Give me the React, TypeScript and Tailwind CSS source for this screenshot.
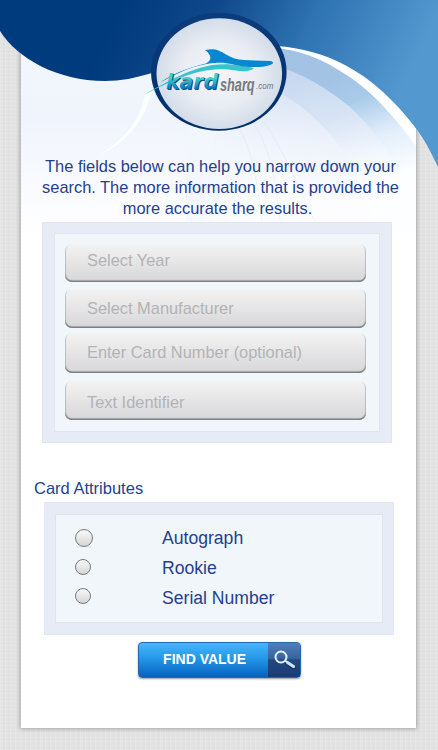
import clsx from "clsx";
import { useState } from "react";

const FIELDS = [
  { name: "year", placeholder: "Select Year", className: "h-[38px] pb-[5px]" },
  {
    name: "manufacturer",
    placeholder: "Select Manufacturer",
    className: "mt-[7px] h-[39px] pb-[1px]",
  },
  {
    name: "number",
    placeholder: "Enter Card Number (optional)",
    className: "mt-[5px] h-[40px] pb-[2px]",
  },
  {
    name: "identifier",
    placeholder: "Text Identifier",
    className: "mt-[8px] h-[39px] pt-[3px]",
  },
];

const ATTRIBUTES = [
  { label: "Autograph", dot: "size-[18px]", row: "h-[30px]" },
  { label: "Rookie", dot: "mb-[2px] size-4", row: "h-[30px]" },
  { label: "Serial Number", dot: "mb-[3px] size-4", row: "h-[29px]" },
];

function Backdrop() {
  return (
    <svg
      className="pointer-events-none absolute top-0 left-0 h-[750px] w-[438px]"
      viewBox="0 0 438 750"
      fill="none"
    >
      <defs>
        <linearGradient
          id="sky"
          gradientUnits="userSpaceOnUse"
          x1="125"
          y1="0"
          x2="385"
          y2="125"
        >
          <stop offset="0" stopColor="#003b7d" />
          <stop offset="0.3" stopColor="#10498b" />
          <stop offset="0.62" stopColor="#2f74b3" />
          <stop offset="1" stopColor="#5398cf" />
        </linearGradient>
        <linearGradient id="paper" x1="0" y1="0" x2="0" y2="1">
          <stop offset="0" stopColor="#f3f7fd" />
          <stop offset="0.5" stopColor="#f0f4fc" />
          <stop offset="0.75" stopColor="#f8faff" />
          <stop offset="1" stopColor="#ffffff" />
        </linearGradient>
        <linearGradient
          id="band"
          gradientUnits="userSpaceOnUse"
          x1="345"
          y1="75"
          x2="378"
          y2="180"
        >
          <stop offset="0" stopColor="#a3c3e4" />
          <stop offset="0.25" stopColor="#a9cbea" />
          <stop offset="0.6" stopColor="#e1eefa" />
          <stop offset="1" stopColor="#fdfeff" />
        </linearGradient>
        <linearGradient
          id="bandMid"
          gradientUnits="userSpaceOnUse"
          x1="310"
          y1="75"
          x2="335"
          y2="195"
        >
          <stop offset="0" stopColor="#c7d8f0" />
          <stop offset="0.4" stopColor="#d9e5f5" />
          <stop offset="0.75" stopColor="#f3f8fd" />
          <stop offset="1" stopColor="#fdfeff" />
        </linearGradient>
        <linearGradient
          id="bandInner"
          gradientUnits="userSpaceOnUse"
          x1="290"
          y1="90"
          x2="280"
          y2="195"
        >
          <stop offset="0" stopColor="#d9e4f5" />
          <stop offset="0.4" stopColor="#ebf1fb" />
          <stop offset="1" stopColor="#fcfdff" />
        </linearGradient>
        <linearGradient id="fade" x1="0" y1="0" x2="1" y2="0">
          <stop offset="0" stopColor="#f2f6fd" />
          <stop offset="1" stopColor="#f2f6fd" stopOpacity="0" />
        </linearGradient>
        <clipPath id="sheet">
          <rect x="21" y="0" width="395" height="728" />
        </clipPath>
      </defs>

      <g clipPath="url(#sheet)">
        <rect x="21" y="0" width="395" height="240" fill="url(#paper)" />
        <path
          d="M270 44C300 47 325 54 345 68C360 77 368 83 376 92C392 110 404 128 420 151V232H270Z"
          fill="url(#band)"
        />
        <path
          d="M260 62C290 67 318 82 345 103C366 120 386 148 398 168C407 186 412 205 416 232H240Z"
          fill="url(#bandMid)"
        />
        <path
          d="M230 82C262 80 292 97 311 115C330 132 344 150 352 166C362 186 370 208 374 232H190Z"
          fill="url(#bandInner)"
        />
        <rect x="186" y="120" width="70" height="112" fill="url(#fade)" />
        <path
          d="M151 92C147 118 125 145 97 156C124 141 140 121 146 92Z"
          fill="#fdfeff"
        />
        <path
          d="M239 128C252 150 258 184 262 222M254 124C268 146 276 176 280 222M263 121C282 147 297 184 315 222"
          stroke="#dbe4f2"
          strokeWidth="1"
          opacity="0.5"
        />
        <path d="M21 205H416V250H21Z" fill="#ffffff" opacity="0.3" />
        <path
          d="M276 45C300 47 325 54 345 65.500C372 80 396 103 420 132V151C404 130 390 112 373 96C365 88 356 81 345 74C328 63 308 52 281 48.500Z"
          fill="#ffffff"
        />
      </g>

      <path
        d="M0 0H438V167C431 152 424 139 416 128.500C396 102 372 79 345 65C325 54.500 302 47.500 276 46L220 58L152 73C135 78 121 81 105 81C57 81 17 58 0 31Z"
        fill="url(#sky)"
      />
    </svg>
  );
}

function Logo() {
  return (
    <svg
      className="absolute top-[10px] left-[140px] h-[124px] w-[160px]"
      viewBox="140 10 160 124"
      role="img"
      aria-label="kardsharq.com"
    >
      <defs>
        <radialGradient id="disc">
          <stop offset="0" stopColor="#f5f6fa" />
          <stop offset="0.6" stopColor="#e9ecf3" />
          <stop offset="1" stopColor="#d3dde9" />
        </radialGradient>
        <linearGradient id="kard" x1="0" y1="0" x2="0" y2="1">
          <stop offset="0.35" stopColor="#42cfca" />
          <stop offset="0.75" stopColor="#0a7cc6" />
        </linearGradient>
        <linearGradient id="ring" x1="0" y1="0" x2="0" y2="1">
          <stop offset="0" stopColor="#0b3c7c" />
          <stop offset="1" stopColor="#002e6c" />
        </linearGradient>
      </defs>
      <ellipse cx="218.8" cy="71.8" rx="67.8" ry="59" fill="url(#ring)" />
      <ellipse cx="219.3" cy="73.6" rx="62.8" ry="55.4" fill="url(#disc)" />

      <path
        d="M143.500 95C167 82 192 66 222 64C232 64 240 66 250 67C256 68 253 70 247 71C237 72 231 68 215 69.500C190 71 166 84 143.500 95Z"
        fill="#38c4cb"
      />
      <path
        d="M160 82.500C177 71 193 67 206 63.500C211 61 213 56 205 50C215 48 219 50 226 54.500C232 58 237 59.500 244 60L270 61C275 62 273 64 270 65C263 67.500 253 67.500 244 66.500C235 65.500 229 62.500 218 62.800C194 64 178 74 160 82.500Z"
        fill="#0787cf"
      />
      <path
        d="M166 80C187 68 207 62.500 225 64"
        stroke="#e8f4fa"
        strokeWidth="0.8"
        fill="none"
      />

      <g
        fontFamily="DejaVu Sans, sans-serif"
        fontSize="21"
        fontWeight="700"
        fontStyle="italic"
      >
        <text
          x="167"
          y="89.600"
          textLength="52"
          lengthAdjust="spacingAndGlyphs"
          fill="#174a70"
        >
          kard
        </text>
        <text
          x="166"
          y="88.800"
          textLength="52"
          lengthAdjust="spacingAndGlyphs"
          fill="url(#kard)"
        >
          kard
        </text>
      </g>
      <text
        transform="translate(220 90.800) scale(0.67 1)"
        fontFamily="Liberation Sans, sans-serif"
        fontSize="19"
        fontWeight="700"
        fontStyle="italic"
        fill="#77797e"
      >
        sharq
      </text>
      <text
        transform="translate(256 89.200) scale(0.89 1)"
        fontFamily="Liberation Sans, sans-serif"
        fontSize="9"
        fontStyle="italic"
        fill="#70747c"
      >
        .com
      </text>
    </svg>
  );
}

function SearchIcon() {
  return (
    <svg className="size-6" viewBox="0 0 24 24" fill="none">
      <path
        d="M14 14L21.500 19.500"
        stroke="#142e5d"
        strokeWidth="4"
        strokeLinecap="round"
      />
      <circle cx="9" cy="9" r="5.500" stroke="#e1f2fc" strokeWidth="2" />
      <path d="M13 12.500L15.500 14.500" stroke="#e1f2fc" strokeWidth="2" />
      <path
        d="M15.500 14.500L21.500 18.500"
        stroke="#c5e8fb"
        strokeWidth="3.200"
        strokeLinecap="round"
      />
    </svg>
  );
}

export default function App() {
  const [attribute, setAttribute] = useState<string | null>(null);

  return (
    <main className="relative h-[750px] w-[438px] overflow-hidden bg-[#e2e2e2] bg-[repeating-linear-gradient(90deg,rgba(255,255,255,0.12)_0_1px,transparent_1px_3px,rgba(0,0,0,0.008)_3px_5px),repeating-linear-gradient(0deg,rgba(255,255,255,0.1)_0_1px,transparent_1px_4px)] font-['Liberation_Sans',Arial,sans-serif] text-[#243f8d]">
      <div className="ml-[21px] h-[728px] w-[395px] bg-white shadow-[0_0_4px_1px_rgba(0,0,0,0.28)]" />
      <Backdrop />
      <Logo />

      <div className="absolute inset-0 flex flex-col pt-[156px]">
        <div className="h-[66px] text-center text-[16.4px] leading-[21px] whitespace-nowrap">
          <p className="pl-[3px]">The fields below can help you narrow down your</p>
          <p className="pl-[3px]">
            search. The more information that is provided the
          </p>
          <p className="pr-[3px]">more accurate the results.</p>
        </div>

        <section className="ml-[42px] h-[221px] w-[350px] border border-[#e0e5f1] bg-[#e6ebf5] px-[11px] py-[10px]">
          <div className="flex h-[199px] flex-col border border-[#dfe6f2] bg-[#f1f6fb] px-[10px] pt-[10px]">
            {FIELDS.map((field) => (
              <input
                key={field.name}
                name={field.name}
                placeholder={field.placeholder}
                className={clsx(
                  "w-[301px] shrink-0 rounded-[7px] bg-linear-to-b from-[#f3f3f3] to-[#d7d7d9] pl-[22px] text-[16.4px] shadow-[inset_0_-1.5px_1px_#7d7e84,inset_1px_-1px_1px_rgba(120,122,128,0.3),inset_-1px_-1px_1px_rgba(120,122,128,0.3)] outline-none placeholder:text-[#b3b3b5] placeholder:opacity-100",
                  field.className,
                )}
              />
            ))}
          </div>
        </section>

        <h2 className="mt-[35px] ml-[34px] h-[24px] text-[16.5px] leading-[21px]">
          Card Attributes
        </h2>

        <section className="ml-[44px] h-[133px] w-[350px] border border-[#e1e6f1] bg-[#e6ebf5] px-[10px] py-[11px]">
          <div className="h-[109px] border border-[#dde4f0] bg-[#f1f6fb] pt-[8px] pl-[19px]">
            {ATTRIBUTES.map((item) => (
              <label
                key={item.label}
                className={clsx("flex items-center", item.row)}
              >
                <span className="flex w-[87px]">
                  <input
                    type="radio"
                    name="attribute"
                    checked={attribute === item.label}
                    onChange={() => setAttribute(item.label)}
                    className={clsx(
                      "appearance-none rounded-full border border-[#77797c] bg-linear-to-b from-[#fafafa] to-[#d5d5d6] checked:to-[#7da8d8]",
                      item.dot,
                    )}
                  />
                </span>
                <span className="text-[17.6px] leading-[22px]">
                  {item.label}
                </span>
              </label>
            ))}
          </div>
        </section>

        <button className="mt-[7px] ml-[138px] flex h-[36px] w-[163px] overflow-hidden rounded-[4px] border border-[#2468b0] bg-linear-to-b from-[#44b8f9] via-[#2093e5] to-[#0960bd] shadow-[0_1px_2px_rgba(0,0,0,0.4)]">
          <span className="flex h-full w-[130px] items-center justify-center pb-[2px] pl-[2px] text-[14px] font-bold text-white">
            FIND VALUE
          </span>
          <span className="flex h-full w-[32px] items-center justify-center bg-[linear-gradient(#517fba,#37649f_45%,#244880_50%,#183c75)]">
            <SearchIcon />
          </span>
        </button>
      </div>
    </main>
  );
}
